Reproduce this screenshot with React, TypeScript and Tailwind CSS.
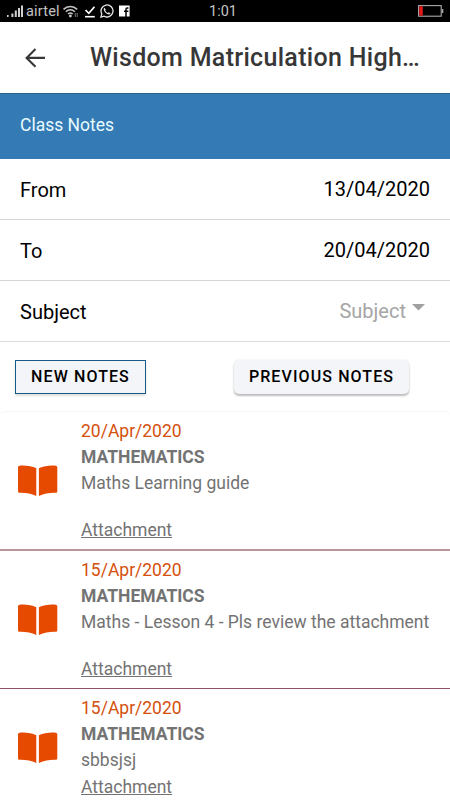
import React from "react";

type Note = {
  date: string;
  subject: string;
  text: string;
  className: string;
  spaced: boolean;
};

const notes: Note[] = [
  {
    date: "20/Apr/2020",
    subject: "MATHEMATICS",
    text: "Maths Learning guide",
    className: "h-[139px] border-b-2 border-[#ba959c]",
    spaced: true,
  },
  {
    date: "15/Apr/2020",
    subject: "MATHEMATICS",
    text: "Maths - Lesson 4 - Pls review the attachment",
    className: "h-[138px] border-b border-[#8f5263]",
    spaced: true,
  },
  {
    date: "15/Apr/2020",
    subject: "MATHEMATICS",
    text: "sbbsjsj",
    className: "h-[118px]",
    spaced: false,
  },
];

const BookIcon = () => (
  <svg width="40" height="32" viewBox="0 0 40 32" fill="#e64a00" className="shrink-0">
    <path d="M1.6 0.7C7.5 0.2 14 1.1 18.3 3.3V31C13 28.4 7.5 27.6 1.4 27.8Q0 27.8 0 26.4V2.2Q0 0.8 1.6 0.7Z" />
    <path d="M37.7 0.7C32 0.2 25.5 1.1 20.9 3.3V31C26.5 28.4 32 27.6 37.9 27.8Q39.3 27.8 39.3 26.4V2.2Q39.3 0.8 37.7 0.7Z" />
  </svg>
);

const StatusBar = () => (
  <div className="h-[22px] bg-black text-[#c4c4c4] flex items-center justify-between pl-[7px] pr-[6px]">
    <div className="flex items-center w-[130px]">
      <svg width="17" height="13" viewBox="0 0 17 13" fill="#d0d0d0" className="shrink-0">
        <rect x="0" y="10" width="1.6" height="2" />
        <rect x="4.4" y="8.5" width="2" height="3.5" />
        <rect x="7.8" y="5.5" width="2" height="6.5" />
        <rect x="11" y="3" width="2" height="9" />
        <rect x="14" y="0.5" width="2" height="11.5" />
      </svg>
      <span className="ml-[2px] text-[14.5px] leading-[22px] tracking-[0.2px] w-[35px] whitespace-nowrap mt-[1px]">
        airtel
      </span>
      <svg width="17" height="14" viewBox="0 0 17 14" fill="none" stroke="#c4c4c4" strokeWidth="1.5" className="ml-[1px] shrink-0">
        <path d="M1.5 5.4C5.5 1.5 11.2 1.5 15.2 5.4" />
        <path d="M3.8 7.8C6.5 5.1 10.2 5.1 12.9 7.8" />
        <path d="M6 10C7.6 8.6 9.1 8.6 10.7 10" />
        <circle cx="8.4" cy="12" r="0.7" fill="#c4c4c4" />
        <path d="M13.3 9V13M15.2 9V13" strokeWidth="1" stroke="#777" />
      </svg>
      <svg width="12" height="13" viewBox="0 0 12 13" fill="none" stroke="#fff" className="ml-[5px] shrink-0">
        <path d="M1.5 5L4.8 8.3L10.5 1.8" strokeWidth="1.7" />
        <path d="M1 11.7H10.8" strokeWidth="1.6" />
      </svg>
      <svg width="14" height="14" viewBox="0 0 14 14" fill="none" stroke="#e8e8e8" className="ml-[4px] shrink-0">
        <path d="M0.9 13.1L1.8 9.9A6 6 0 1 1 4.1 12.2Z" strokeWidth="1.3" />
        <path d="M4.6 3.7L5.8 5.7L5.2 6.5C5.9 7.8 6.6 8.4 7.8 9L8.7 8.2L10.5 9.2C9.8 11 7.5 10.6 5.8 9C3.8 7.2 3 4.7 4.6 3.7Z" fill="#e8e8e8" stroke="none" />
      </svg>
      <svg width="11" height="12" viewBox="0 0 11 12" className="ml-[5px] shrink-0">
        <rect x="0" y="0.5" width="10.6" height="11" fill="#fff" />
        <path d="M9.4 2.9H8.3Q7 2.9 7 4.3V12M5 6.3H9.4" stroke="#000" strokeWidth="1.5" fill="none" />
      </svg>
    </div>
    <span className="text-[14.5px] leading-[22px] -ml-[5px] mt-[2px]">1:01</span>
    <div className="w-[130px] flex justify-end">
      <svg width="26" height="12" viewBox="0 0 26 12">
        <rect x="0.6" y="0.6" width="22.6" height="10.6" fill="none" stroke="#aaa" strokeWidth="1.1" />
        <rect x="1.2" y="1.3" width="3.6" height="9.3" fill="#e01818" />
        <rect x="23.8" y="4" width="1.5" height="4" fill="#aaa" />
      </svg>
    </div>
  </div>
);

const App = () => {
  return (
    <div className="w-[450px] h-[800px] overflow-hidden bg-white font-['Roboto',sans-serif] text-black">
      <StatusBar />

      <header className="h-[71px] flex items-center pl-[25px] text-[#373737]">
        <svg width="22" height="20" viewBox="0 0 22 20" fill="none" stroke="#373737" strokeWidth="2.1" className="shrink-0">
          <path d="M10.5 1L1.6 9.9L10.5 18.8M1.6 9.9H20" />
        </svg>
        <h1 className="ml-[43px] text-[25px] font-medium tracking-[0.31px] w-[335px] whitespace-nowrap">
          Wisdom Matriculation High…
        </h1>
      </header>

      <div className="h-[66px] bg-[#347ab5] border-t border-[#28628f] flex items-center px-5 pb-[3px] text-[17.5px] text-[#e8fbff]">
        Class Notes
      </div>

      <div className="text-[20px]">
        <div className="h-[61px] border-b border-[#d5d5d5] flex items-center justify-between px-5">
          <span className="mt-[1px]">From</span>
          <span className="-mt-[1px]">13/04/2020</span>
        </div>
        <div className="h-[61px] border-b border-[#d5d5d5] flex items-center justify-between px-5">
          <span className="mt-[2px]">To</span>
          <span>20/04/2020</span>
        </div>
        <div className="h-[61px] border-b border-[#dcdcdc] flex items-center justify-between pl-5 pr-[25px]">
          <span className="mt-[2px]">Subject</span>
          <span className="flex items-center gap-[6px] text-[#a5a5a5]">
            Subject
            <svg width="13" height="7" viewBox="0 0 13 7" fill="#a0a0a0" className="-mt-[7px]">
              <path d="M0 0H13L6.5 6.5Z" />
            </svg>
          </span>
        </div>
      </div>

      <div className="h-[69px] pt-[18px] pl-[15px] flex items-start">
        <button className="w-[131px] h-[34px] bg-[#f4f5f8] border border-[#155b86] text-[16px] font-medium tracking-[1.1px] shadow-[0_2px_2px_rgba(0,0,0,0.12)] whitespace-nowrap">
          NEW NOTES
        </button>
        <button className="ml-[88px] w-[175px] h-[34px] rounded-[5px] bg-[#f4f5f8] text-[16px] font-medium tracking-[1.1px] shadow-[0_2px_2px_rgba(0,0,0,0.25),0_0_2px_rgba(0,0,0,0.1)] whitespace-nowrap">
          PREVIOUS NOTES
        </button>
      </div>

      <div className="border-t border-[#f6f6f6] rounded-t-[5px] text-[17.5px] leading-[26.2px] text-[#737373]">
        {notes.map((note, i) => (
          <div key={i} className={`flex items-start pl-[18px] pt-[6px] ${note.className}`}>
            <div className={note.spaced ? "pt-[47px]" : "pt-[37px]"}>
              <BookIcon />
            </div>
            <div className="ml-[23px] whitespace-nowrap">
              <p className="text-[#d4500c]">{note.date}</p>
              <p className="font-bold">{note.subject}</p>
              <p>{note.text}</p>
              <p className={note.spaced ? "mt-[20px] underline" : "underline"}>Attachment</p>
            </div>
          </div>
        ))}
      </div>
    </div>
  );
};

export default App;
